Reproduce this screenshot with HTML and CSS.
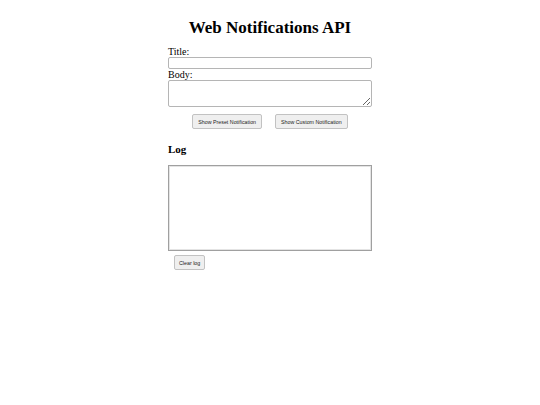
FILE: index.html
```html
<!DOCTYPE html>
<html>
<head>
<meta charset="utf-8">
<link rel="stylesheet" href="styles.css">
</head>
<body>
<div class="page">
  <h1 class="title">Web Notifications API</h1>
  <form class="form">
    <label class="label" for="t">Title:</label>
    <input class="field" id="t" type="text">
    <label class="label" for="b">Body:</label>
    <textarea class="area" id="b"></textarea>
    <div class="buttons">
      <button type="button" class="btn">Show Preset Notification</button>
      <button type="button" class="btn">Show Custom Notification</button>
    </div>
  </form>
  <h2 class="log-title">Log</h2>
  <div class="log"></div>
  <div class="clear-row">
    <button type="button" class="btn">Clear log</button>
  </div>
</div>
</body>
</html>
```
FILE: styles.css
```css
html, body {
  margin: 0;
  padding: 0;
  background: #fff;
}
body {
  font-family: "Liberation Serif", "Times New Roman", serif;
  color: #000;
}
.page {
  width: 204px;
  margin: 0 auto;
  padding-top: 17px;
  display: flex;
  flex-direction: column;
}
.title {
  margin: 0 0 8px;
  font-size: 17px;
  font-weight: bold;
  text-align: center;
  line-height: 22px;
  white-space: nowrap;
}
.form {
  display: flex;
  flex-direction: column;
}
.label {
  font-size: 10px;
  line-height: 10px;
}
.field {
  box-sizing: border-box;
  width: 204px;
  height: 12px;
  margin: 0 0 1px;
  padding: 0 2px;
  border: 1px solid #b5b5b5;
  border-radius: 2px;
}
.area {
  box-sizing: border-box;
  width: 204px;
  height: 27px;
  margin: 0;
  padding: 1px;
  border: 1px solid #b5b5b5;
  border-radius: 2px;
  resize: vertical;
}
.buttons {
  display: flex;
  justify-content: center;
  gap: 13px;
  margin-top: 7px;
}
.btn {
  box-sizing: border-box;
  height: 15px;
  padding: 0 5px;
  margin: 0;
  font-family: "Liberation Sans", Arial, sans-serif;
  font-size: 5.3px;
  color: #222;
  background: #efefef;
  border: 1px solid #c2c2c2;
  border-radius: 2px;
}
.clear-row .btn {
  padding: 0 4px;
}
.log-title {
  margin: 14px 0 9px;
  font-size: 11px;
  font-weight: bold;
  line-height: 13px;
}
.log {
  box-sizing: border-box;
  height: 86px;
  border: 1px solid #a0a0a0;
  box-shadow: inset 0 0 0 1px #e4e4e4;
}
.clear-row {
  display: flex;
  padding: 4px 0 0 6px;
}
```
